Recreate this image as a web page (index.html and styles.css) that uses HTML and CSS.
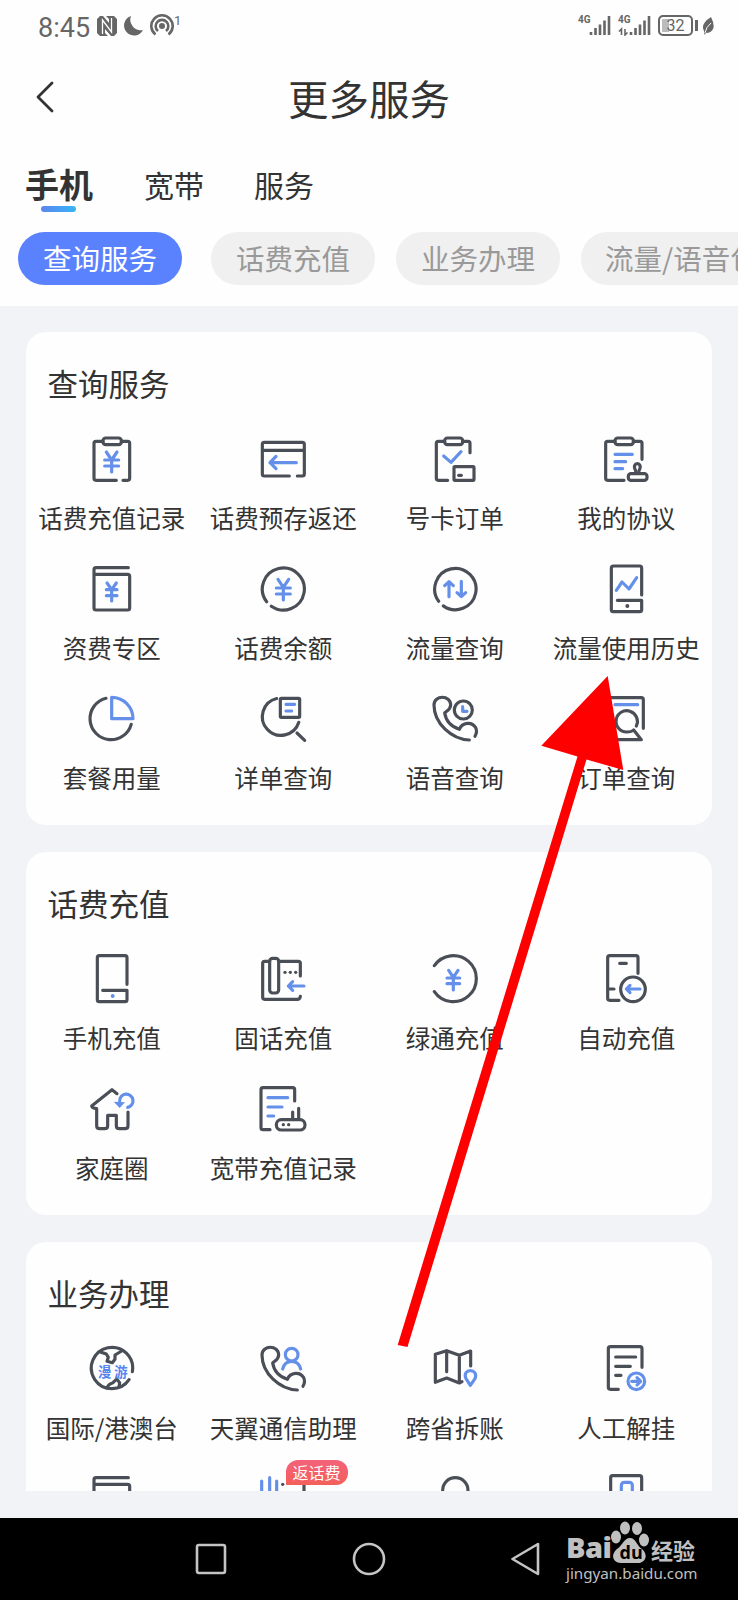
FILE: index.html
```
<!DOCTYPE html>
<html lang="zh-CN">
<head>
  <meta charset="UTF-8" />
  <title>更多服务</title>
  <link rel="stylesheet" href="styles.css">
</head>
<body>

  <!-- shared shapes -->
  <svg width="0" height="0" class="defs">
    <symbol id="handset" viewBox="0 0 150 150">
      <path d="M118 138C65 136 12 88 12 33C12 2 62 2 62 33C62 46 52 50 44 57C48 82 64 98 88 106C97 84 126 82 137 101C141 109 139 120 135 127" />
    </symbol>
    <symbol id="wallet" viewBox="0 0 150 150">
      <path d="M124 11H27q-6 0-6 6V132q0 6 6 6H122q6 0 6-6V37q0-6-6-6H21" />
    </symbol>
  </svg>

  <div class="status-bar">
    <div class="status-left">
      <span class="time">8:45</span>
      <svg class="nfc" width="20" height="20" viewBox="0 0 20 20"><path class="fill" d="M3 0H6L12 7V3L9 0H17L20 3V17L17 20H14L8 13V17L11 20H3L0 17V3Z" /><path d="M5.500 18V4L14.500 16V2" /></svg>
      <svg class="moon" width="19" height="20" viewBox="0 0 19 20"><path class="fill" d="M7 0A10 10 0 1 0 19 14A10.500 10.500 0 0 1 7 0Z" /></svg>
      <svg class="hotspot" width="24" height="22" viewBox="0 0 24 22"><circle class="fill" cx="12" cy="12" r="3" /><path d="M5.500 20.500A10.700 10.700 0 1 1 18.500 20.500M8 17A6.300 6.300 0 1 1 16 17" /></svg>
      <sup>1</sup>
    </div>
    <div class="status-right">
      <div class="signal">
        <span>4G</span>
        <svg width="33" height="21" viewBox="0 0 33 21"><path d="M13 17v3M17.500 13v7M22 9.500v10.500M26.500 5.500v14.500M31 1v19" /></svg>
      </div>
      <div class="signal">
        <span>4G</span>
        <svg width="33" height="21" viewBox="0 0 33 21"><path d="M13 17v3M17.500 13v7M22 9.500v10.500M26.500 5.500v14.500M31 1v19" /><path class="thin" d="M3.500 20v-6L1 16.500M7 14v6L9.500 17.500" /></svg>
      </div>
      <div class="battery">32</div>
      <svg class="leaf" width="13" height="18" viewBox="0 0 13 18"><path class="fill" d="M9 0Q13 8 11 12Q9 16 4 16L2.500 18L2 14Q-2 7 9 0Z" /><path d="M3 16Q4 10 9 6" /></svg>
    </div>
  </div>

  <div class="title-bar">
    <svg class="back" width="20" height="32" viewBox="0 0 20 32"><path d="M17 2L3 16L17 30" /></svg>
    <h1>更多服务</h1>
  </div>

  <div class="tabs">
    <span class="tab active">手机</span>
    <span class="tab">宽带</span>
    <span class="tab">服务</span>
  </div>

  <div class="chips">
    <span class="chip active">查询服务</span>
    <span class="chip">话费充值</span>
    <span class="chip">业务办理</span>
    <span class="chip">流量/语音包</span>
  </div>

  <div class="content">
    <div class="list">

      <div class="card">
        <h2>查询服务</h2>
        <div class="grid">
          <div class="item">
            <svg class="icon" viewBox="0 0 150 150"><path d="M48 22H27q-6 0-6 6V133q0 6 6 6H88M108 139H122q6 0 6-6V28q0-6-6-6H103" /><rect x="48" y="12" width="55" height="20" rx="8" /><path class="blue" d="M58 54L74 78L90 54M74 78V114M53 78H95M53 96H95" /></svg>
            <span>话费充值记录</span>
          </div>
          <div class="item">
            <svg class="icon" viewBox="0 0 150 150"><path d="M94 126H19q-6 0-6-6V31q0-6 6-6H133q6 0 6 6V120q0 6-6 6H118M13 49H139" /><path class="blue" d="M115 86H36M54 67L36 86L54 104" /></svg>
            <span>话费预存返还</span>
          </div>
          <div class="item">
            <svg class="icon" viewBox="0 0 150 150"><path d="M44 22H25q-6 0-6 6V133q0 6 6 6H53M98 22H114q6 0 6 6V56" /><rect x="44" y="12" width="54" height="20" rx="8" /><rect x="72" y="98" width="60" height="41" rx="3" /><path d="M86 124H94" /><path class="blue" d="M41 66L63 85L93 53" /></svg>
            <span>号卡订单</span>
          </div>
          <div class="item">
            <svg class="icon" viewBox="0 0 150 150"><path d="M42 22H20q-6 0-6 6V133q0 6 6 6H69M97 22H117q6 0 6 6V76" /><rect x="42" y="12" width="55" height="20" rx="8" /><rect x="82" y="119" width="56" height="20" rx="8" /><path d="M104 118V110C88 82 130 82 114 110V118" /><path class="blue" d="M42 61H94M42 83H74M42 104H65" /></svg>
            <span>我的协议</span>
          </div>
          <div class="item">
            <svg class="icon" viewBox="0 0 150 150"><use href="#wallet" /><path class="blue" d="M60 57L74 77L88 57M74 77V111M58 77H90M58 95H90" /></svg>
            <span>资费专区</span>
          </div>
          <div class="item">
            <svg class="icon" viewBox="0 0 150 150"><path d="M26 113.300A63 63 0 1 1 40 126.700" /><path class="blue" d="M60 46L76 70L92 46M76 70V108M55 72H97M55 90H97" /></svg>
            <span>话费余额</span>
          </div>
          <div class="item">
            <svg class="icon" viewBox="0 0 150 150"><path d="M26 111.700A62 62 0 1 1 40 125.600" /><path class="blue" d="M57 98V54M44 65L57 53L70 65M94 52V96M81 86L94 98L107 86" /></svg>
            <span>流量查询</span>
          </div>
          <div class="item">
            <svg class="icon" viewBox="0 0 150 150"><path d="M122 93V12q0-6-6-6H37q-6 0-6 6V137q0 6 6 6H116q6 0 6-6V109H49" /><circle class="dot" cx="79" cy="126" r="6" /><path class="blue" d="M46 79L63 54L84 75L107 41" /></svg>
            <span>流量使用历史</span>
          </div>
          <div class="item">
            <svg class="icon" viewBox="0 0 150 150"><path d="M57 12.800A63 63 0 1 0 132.700 91" /><path class="blue" d="M74 10V74H138A64 64 0 0 0 74 10Z" /></svg>
            <span>套餐用量</span>
          </div>
          <div class="item">
            <svg class="icon" viewBox="0 0 150 150"><path d="M56 13.500A56 56 0 1 0 122.400 85M117 117L140 139" /><rect x="67" y="13" width="58" height="57" rx="3" /><path class="blue" d="M84 31H110M84 51H101" /></svg>
            <span>详单查询</span>
          </div>
          <div class="item">
            <svg class="icon" viewBox="0 0 150 150"><use href="#handset" /><circle cx="100" cy="48" r="27" /><path class="blue" d="M98 38V52H111" /></svg>
            <span>语音查询</span>
          </div>
          <div class="item">
            <svg class="icon" viewBox="0 0 150 150"><path d="M127 103V17q0-6-6-6H26q-6 0-6 6V131q0 6 6 6H121L98 108Q92 114 77 114A32 32 0 1 1 106 96" /><path class="blue" d="M42 32H110" /></svg>
            <span>订单查询</span>
          </div>
        </div>
      </div>

      <div class="card">
        <h2>话费充值</h2>
        <div class="grid">
          <div class="item">
            <svg class="icon" viewBox="0 0 150 150"><path d="M120 91V11q0-6-6-6H37q-6 0-6 6V137q0 6 6 6H114q6 0 6-6V109H47" /><circle class="dot-blue" cx="77" cy="126" r="6" /></svg>
            <span>手机充值</span>
          </div>
          <div class="item">
            <svg class="icon" viewBox="0 0 150 150"><path d="M35 22H20q-6 0-6 6V130q0 6 6 6H118q8 0 9-9M62 22H121q6 0 6 6V66" /><rect x="35" y="13" width="27" height="104" rx="9" /><circle class="dot" cx="81" cy="55" r="5" /><circle class="dot" cx="97" cy="55" r="5" /><circle class="dot" cx="113" cy="55" r="5" /><path class="blue" d="M138 96H91M104 83L91 96L104 109" /></svg>
            <span>固话充值</span>
          </div>
          <div class="item">
            <svg class="icon" viewBox="0 0 150 150"><path d="M13 35.100A69 69 0 1 1 13 112.900" /><path class="blue" d="M56 49L70 70L84 49M70 70V108M51 72H89M51 89H89" /></svg>
            <span>绿通充值</span>
          </div>
          <div class="item">
            <svg class="icon" viewBox="0 0 150 150"><path d="M111 58V11q0-6-6-6H26q-6 0-6 6V133q0 6 6 6H54M56 28H76M22 105H39" /><circle cx="96" cy="106" r="37" /><path class="blue" d="M117 105H77M87 94L76 105L87 116" /></svg>
            <span>自动充值</span>
          </div>
          <div class="item">
            <svg class="icon" viewBox="0 0 150 150"><path d="M90 29L75 17L14 66Q15 73 29 74V125q0 9 9 9H53q9 0 9-9V94H88V125q0 9 9 9H114q9 0 9-9V84" /><path class="blue" d="M98 52A20 20 0 1 1 122 70" /><path class="dot-blue" d="M80 53L114 55L98 72Z" /></svg>
            <span>家庭圈</span>
          </div>
          <div class="item">
            <svg class="icon" viewBox="0 0 150 150"><path d="M110 51V17q0-6-6-6H15q-6 0-6 6V131q0 6 6 6H36M104 84V106M122 73V106" /><rect x="55" y="107" width="86" height="31" rx="15" /><circle class="dot" cx="76" cy="122" r="5" /><circle class="dot" cx="92" cy="122" r="5" /><path class="blue" d="M30 41H89M30 69H72M30 96H47" /></svg>
            <span>宽带充值记录</span>
          </div>
        </div>
      </div>

      <div class="card">
        <h2>业务办理</h2>
        <div class="grid">
          <div class="item">
            <svg class="icon" viewBox="0 0 150 150"><path d="M136 83A62 62 0 1 0 126.200 107" /><path d="M38 23L58 30L64 40L60 52L76 56L84 46V33L104 21M60 131Q64 120 78 116L89 105L98 116L96 129" /><text x="33" y="99">漫</text><text x="82" y="99">游</text></svg>
            <span>国际/港澳台</span>
          </div>
          <div class="item">
            <svg class="icon" viewBox="0 0 150 150"><use href="#handset" /><circle class="blue" cx="101" cy="32" r="19" /><path class="blue" d="M74 75Q80 52 101 52Q122 52 128 75" /></svg>
            <span>天翼通信助理</span>
          </div>
          <div class="item">
            <svg class="icon" viewBox="0 0 150 150"><path d="M122 66V21L88 34L50 20L16 31V115L50 102L88 117L96 113M50 20V83M88 34V116" /><path class="blue" d="M121 124L108 104C94 72 148 72 135 104Z" /></svg>
            <span>跨省拆账</span>
          </div>
          <div class="item">
            <svg class="icon" viewBox="0 0 150 150"><path d="M123 70V14q0-6-6-6H28q-6 0-6 6V130q0 6 6 6H52M44 39H104M44 67H88M44 94H60" /><circle class="blue" cx="106" cy="112" r="25" /><path class="blue" d="M92 112H118M108 101L119 112L108 123" /></svg>
            <span>人工解挂</span>
          </div>
          <div class="item">
            <svg class="icon" viewBox="0 0 150 150"><use href="#wallet" /></svg>
          </div>
          <div class="item">
            <svg class="icon" viewBox="0 0 150 150"><path class="blue" d="M11 21V100M35 11V100M56 21V100" /><circle class="dot" cx="74" cy="31" r="5" /><path d="M138 30V100" /></svg>
            <em class="badge">返话费</em>
          </div>
          <div class="item">
            <svg class="icon" viewBox="0 0 150 150"><circle cx="76" cy="49" r="38" /></svg>
          </div>
          <div class="item">
            <svg class="icon" viewBox="0 0 150 150"><path d="M29 143V11q0-6 6-6H116q6 0 6 6V143" /><rect class="blue" x="61" y="25" width="33" height="40" rx="9" /></svg>
          </div>
        </div>
      </div>

    </div>
  </div>

  <div class="nav-bar">
    <svg width="32" height="34" viewBox="0 0 32 34"><rect x="2" y="3" width="28" height="28" rx="2" /></svg>
    <svg width="34" height="34" viewBox="0 0 34 34"><circle cx="17" cy="17" r="15" /></svg>
    <svg width="32" height="34" viewBox="0 0 32 34"><path d="M27 2V32L1.500 17Z" /></svg>
    <div class="watermark">
      <div class="brand">
        <b>Bai</b>
        <svg width="38" height="42" viewBox="0 0 38 42"><ellipse cx="5" cy="16" rx="5" ry="6.500" /><ellipse cx="14" cy="7" rx="5" ry="6.500" /><ellipse cx="26" cy="7.500" rx="5" ry="6.500" /><ellipse cx="33" cy="19" rx="5" ry="6.500" /><path d="M19 17C25 17 25 24 31 28C38 34 34 42 27 42H10C2 42 -1 34 6 28C12 24 13 17 19 17Z" /><text x="8.500" y="38">du</text></svg>
        <span>经验</span>
      </div>
      <div class="url">jingyan.baidu.com</div>
    </div>
  </div>

  <svg class="pointer" width="230" height="674" viewBox="0 0 230 674">
    <path d="M211.700 0L227.300 94L190.500 83.500L11.500 671L1.700 669L181.500 80.500L145.300 69.700Z" />
  </svg>

</body>
</html>
```

FILE: styles.css
```
* {
  box-sizing: border-box;
}

body {
  margin: 0;
  width: 738px;
  height: 1600px;
  position: relative;
  overflow: hidden;
  background: #fefefe;
  color: #333;
  font-family: "Noto Sans CJK SC", sans-serif;
}

svg {
  display: block;
  flex-shrink: 0;
  fill: none;
}

.defs {
  position: absolute;
}

/* status bar */
.status-bar {
  display: flex;
  justify-content: space-between;
  height: 52px;
  padding: 15px 23px 0 38px;
  color: #666;
  font-family: Roboto, sans-serif;
}

.status-left,
.status-right {
  display: flex;
  align-items: flex-start;
}

.status-bar svg {
  stroke: #666;
  stroke-width: 2.6;
}

.status-bar .fill {
  fill: #666;
  stroke: none;
}

.time {
  width: 59px;
  font-size: 27px;
  line-height: 27px;
}

.status-bar .nfc {
  margin-top: 1px;
  stroke: #fff;
  stroke-width: 1.3;
}

.moon {
  margin: 1px 0 0 7px;
}

.hotspot {
  margin: -1px 0 0 7px;
}

.status-left sup {
  font-size: 13px;
  line-height: 12px;
}

.signal {
  position: relative;
  width: 40px;
}

.signal span {
  position: absolute;
  top: -1px;
  left: 0;
  font-size: 10px;
  font-weight: bold;
  line-height: 12px;
}

.status-bar .thin {
  stroke-width: 1.6;
}

.battery {
  position: relative;
  width: 35px;
  height: 21px;
  border: 2px solid #666;
  border-radius: 5px;
  background: linear-gradient(90deg, #bbb 30%, #fefefe 30%);
  box-shadow: inset 0 0 0 2px #fefefe;
  font-size: 16px;
  line-height: 18px;
  text-align: center;
}

.battery::after {
  content: "";
  position: absolute;
  top: 3px;
  right: -7px;
  width: 3px;
  height: 11px;
  background: #666;
}

.leaf {
  margin: 2px 0 0 9px;
}

.status-bar .leaf path:last-child {
  stroke: #fff;
  stroke-width: 1;
}

/* header */
.title-bar {
  display: flex;
  align-items: center;
  height: 98px;
  padding-left: 35px;
}

.back {
  margin-top: -8px;
  stroke: #333;
  stroke-width: 2.8;
  stroke-linecap: round;
  stroke-linejoin: round;
}

h1 {
  flex: 1;
  margin: -6px 55px 0 0;
  font-size: 40.500px;
  font-weight: normal;
  line-height: 60px;
  text-align: center;
}

.tabs {
  display: flex;
  align-items: center;
  height: 70px;
  padding: 0 0 3px 25px;
}

.tab {
  width: 110px;
  font-size: 30px;
  line-height: 50px;
}

.tab.active {
  position: relative;
  width: 119px;
  font-size: 34px;
  font-weight: bold;
}

.tab.active::after {
  content: "";
  position: absolute;
  left: 16px;
  bottom: -3px;
  width: 35px;
  height: 6px;
  border-radius: 3px;
  background: linear-gradient(90deg, #5c86ee, #35b5f6);
}

.chips {
  display: flex;
  gap: 21px;
  height: 86px;
  padding: 12px 0 0 18px;
  overflow: hidden;
}

.chip {
  flex-shrink: 0;
  height: 53px;
  padding: 0 25px;
  border-radius: 27px;
  background: #f0f0f0;
  color: #999;
  font-size: 28.500px;
  line-height: 52px;
}

.chip:last-child {
  padding-left: 24px;
}

.chip.active {
  margin-right: 8px;
  background: #5a82ff;
  color: #fff;
}

/* service cards */
.content {
  height: 1212px;
  padding: 0 26px 27px;
  background: #f1f3f7;
}

.list {
  height: 1185px;
  padding-top: 26px;
  overflow: hidden;
}

.card {
  width: 686px;
  margin-bottom: 27px;
  padding-bottom: 1px;
  border-radius: 20px;
  background: #fefefe;
}

h2 {
  height: 102px;
  margin: 0;
  padding: 29px 0 0 21.500px;
  font-size: 30.500px;
  font-weight: normal;
  line-height: 44px;
}

.grid {
  display: grid;
  grid-template-columns: repeat(4, 1fr);
  grid-auto-rows: 130px;
}

.item {
  position: relative;
  display: flex;
  flex-direction: column;
  align-items: center;
  font-size: 24.500px;
  line-height: 36px;
  white-space: nowrap;
}

.icon {
  width: 50px;
  height: 50px;
  margin-bottom: 16px;
  stroke: #4a4f57;
  stroke-width: 9.500;
  stroke-linecap: round;
  stroke-linejoin: round;
}

.icon .blue {
  stroke: #6590ea;
}

.icon .dot {
  fill: #4a4f57;
  stroke: none;
}

.icon .dot-blue {
  fill: #6590ea;
  stroke: none;
}

.icon text {
  fill: #5585ee;
  stroke: none;
  font-size: 40px;
  font-weight: bold;
}

.badge {
  position: absolute;
  top: -14px;
  left: 88px;
  width: 62px;
  height: 25px;
  border-radius: 12px 12px 12px 1px;
  background: linear-gradient(#f4627a, #f3605a);
  color: #fff;
  font-size: 16px;
  font-style: normal;
  line-height: 25px;
  text-align: center;
}

/* bottom navigation */
.nav-bar {
  position: relative;
  display: flex;
  gap: 125px;
  height: 82px;
  padding: 24px 0 0 195px;
  background: #000;
}

.nav-bar > svg {
  stroke: #c4c4c4;
  stroke-width: 2.6;
  stroke-linejoin: round;
}

.watermark {
  position: absolute;
  top: 3px;
  left: 566px;
  color: #c0c0c0;
}

.brand {
  display: flex;
  align-items: flex-end;
  height: 42px;
}

.brand b {
  width: 45px;
  font-family: "Open Sans", sans-serif;
  font-size: 29px;
  font-weight: 800;
  line-height: 33px;
  letter-spacing: -0.500px;
}

.brand svg {
  fill: #c0c0c0;
}

.brand text {
  fill: #000;
  font-family: "Open Sans", sans-serif;
  font-size: 18px;
  font-weight: bold;
}

.brand span {
  margin-left: 2px;
  font-size: 22px;
  font-weight: bold;
  line-height: 28px;
}

.url {
  font-family: "Noto Sans", sans-serif;
  font-size: 15.200px;
  line-height: 21px;
}

/* red arrow over the page */
.pointer {
  position: absolute;
  top: 676px;
  left: 396px;
}

.pointer path {
  fill: #f00;
}
```
